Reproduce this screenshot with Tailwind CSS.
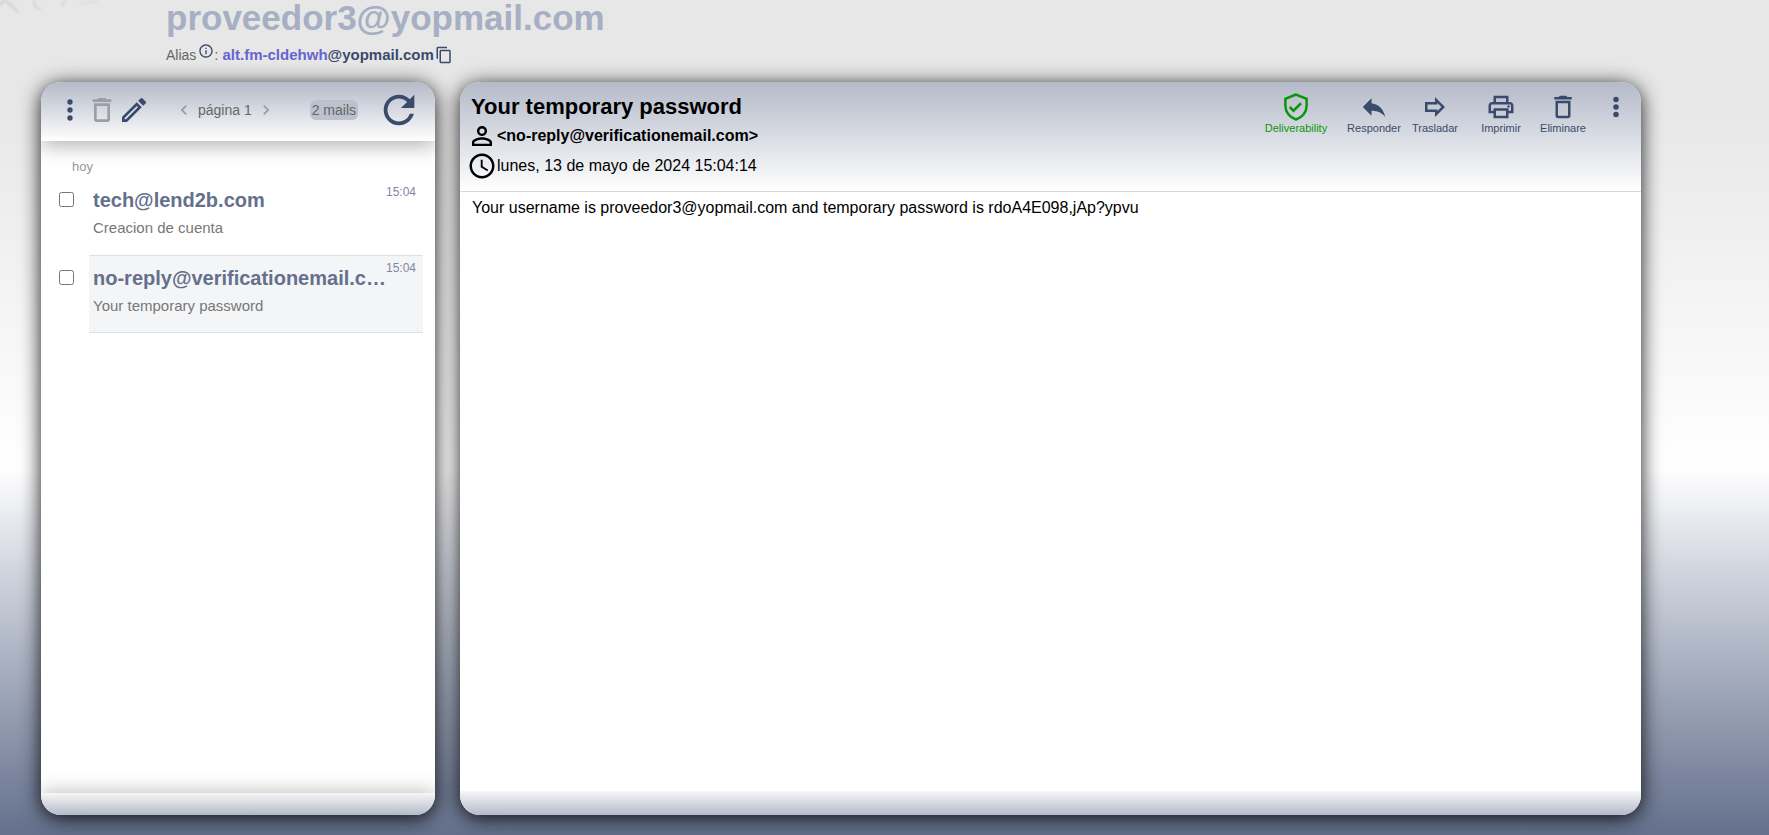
<!DOCTYPE html>
<html lang="es">
<head>
  <meta charset="UTF-8" />
  <meta name="viewport" content="width=device-width, initial-scale=1.0"/>
  <title>YOPmail - Inbox</title>
  <script src="https://cdn.jsdelivr.net/npm/@tailwindcss/browser@4"></script>
</head>
<body class="font-['Liberation_Sans',Arial,sans-serif] text-[#3a4a6b]">
  <div class="relative flex h-screen flex-col overflow-hidden bg-linear-to-b from-[#e7e7e7] from-12% via-white via-56% to-[#64708c] pb-5">

    <!-- Handwritten watermark -->
    <svg class="absolute top-0 left-0 h-5 w-28 opacity-40 blur-[1px]" viewBox="0 0 112 20" fill="none" stroke="#b4bac6" stroke-linecap="round">
      <path d="M0 5 4 0M5 0 17 11" stroke-width="3" />
      <path d="M35 0c-2 4-1 7 5 9M65 0l-3 6" stroke-width="2" />
      <path d="M81 0c-1 3 1 5 4 4l5-3 4 2 4-3" stroke-width="1" />
    </svg>

    <!-- Address -->
    <header class="h-[82px] shrink-0 pl-[166px]">
      <h1 class="text-[35px] leading-9 font-bold text-[#a6afc3]">proveedor3@yopmail.com</h1>
      <div class="mt-[9px] flex h-5 items-center text-[15px] leading-5">
        <span class="text-sm text-[#666]">Alias</span>
        <svg class="mb-2 ml-0.5 size-4" viewBox="0 0 24 24" fill="currentColor"><path d="M11 7h2v2h-2zm0 4h2v6h-2zm1-9C6.48 2 2 6.48 2 12s4.48 10 10 10 10-4.48 10-10S17.52 2 12 2zm0 18c-4.41 0-8-3.59-8-8s3.59-8 8-8 8 3.59 8 8-3.59 8-8 8z" /></svg>
        <span class="mr-1 text-[#666]">:</span>
        <b><span class="text-[#6565cf]">alt.fm-cldehwh</span>@yopmail.com</b>
        <button aria-label="Copiar"><svg class="ml-px size-[18px]" viewBox="0 0 24 24" fill="currentColor"><path d="M16 1H4c-1.1 0-2 .9-2 2v14h2V3h12V1zm3 4H8c-1.1 0-2 .9-2 2v14c0 1.1.9 2 2 2h11c1.1 0 2-.9 2-2V7c0-1.1-.9-2-2-2zm0 16H8V7h11v14z" /></svg></button>
      </div>
    </header>

    <main class="flex min-h-0 grow gap-[25px] pr-32 pl-[41px]">

      <!-- Inbox list -->
      <section class="flex w-[394px] shrink-0 flex-col overflow-hidden rounded-[20px] bg-white shadow-[0_3px_20px_rgba(0,0,0,0.9)]">
        <div class="z-10 flex h-[59px] shrink-0 items-center bg-linear-to-b from-[#b4bac8] to-white pr-[13px] pb-1 pl-[13px] text-sm text-[#666] shadow-[0_5px_20px_rgba(0,0,0,0.3)]">
          <button aria-label="Menú"><svg class="size-8 text-[#3a4a6b]" viewBox="0 0 24 24" fill="currentColor"><circle cx="12" cy="6" r="2" /><circle cx="12" cy="12" r="2" /><circle cx="12" cy="18" r="2" /></svg></button>
          <button aria-label="Borrar"><svg class="size-8 text-[#9b9ea5]" viewBox="0 0 24 24" fill="currentColor"><path d="M16 9v10H8V9h8m-1.5-6h-5l-1 1H5v2h14V4h-3.5l-1-1zM18 7H6v12c0 1.1.9 2 2 2h8c1.1 0 2-.9 2-2V7z" /></svg></button>
          <button aria-label="Escribir"><svg class="size-8 text-[#3a4a6b]" viewBox="0 0 24 24" fill="currentColor"><path d="M14.06 9.02l.92.92L5.92 19H5v-.92l9.06-9.06M17.66 3c-.25 0-.51.1-.7.29l-1.83 1.83 3.75 3.75 1.83-1.83c.39-.39.39-1.02 0-1.41l-2.34-2.34c-.2-.2-.45-.29-.71-.29zm-3.6 3.19L3 17.25V21h3.75L17.81 9.94l-3.75-3.75z" /></svg></button>
          <button class="ml-6" aria-label="Anterior"><svg class="size-5 text-[#999ca4]" viewBox="0 0 24 24" fill="currentColor"><path d="M15.41 7.41 14 6l-6 6 6 6 1.41-1.41L10.83 12z" /></svg></button>
          <span class="mx-1">página 1</span>
          <button aria-label="Siguiente"><svg class="size-5 text-[#999ca4]" viewBox="0 0 24 24" fill="currentColor"><path d="M10 6 8.59 7.41 13.17 12l-4.58 4.59L10 18l6-6z" /></svg></button>
          <span class="ml-auto rounded-md bg-[#bcc1ce] px-0.5">2 mails</span>
          <button class="ml-[18px]" aria-label="Actualizar"><svg class="size-[46px]" viewBox="0 0 24 24" fill="#3a4a6b"><path d="M17.65 6.35C16.2 4.9 14.21 4 12 4c-4.42 0-7.99 3.58-7.99 8s3.57 8 7.99 8c3.73 0 6.84-2.55 7.73-6h-2.08c-.82 2.33-3.04 4-5.65 4-3.31 0-6-2.69-6-6s2.69-6 6-6c1.66 0 3.14.69 4.22 1.78L13 11h7V4l-2.35 2.35z" /></svg></button>
        </div>

        <div class="grow pr-3 pl-[18px]">
          <p class="pt-4 pb-px pl-[13px] text-[13px] leading-5 text-[#999]">hoy</p>
          <div class="flex h-[77px]">
            <input type="checkbox" id="mail1" class="mt-3.5 mr-[15px] size-[15px] shrink-0" />
            <label for="mail1" class="relative min-w-0 grow px-1 pt-2.5">
              <span class="block w-[294px] truncate text-xl leading-6 font-bold text-[#64708c]">tech@lend2b.com</span>
              <span class="mt-1.5 block text-[15px] leading-5 text-[#777]">Creacion de cuenta</span>
              <span class="absolute top-1.5 right-[7px] text-xs text-[#7e88a0]">15:04</span>
            </label>
          </div>
          <div class="flex h-[78px]">
            <input type="checkbox" id="mail2" class="mt-[15px] mr-[15px] size-[15px] shrink-0" />
            <label for="mail2" class="relative min-w-0 grow border-y border-[#dcdfe4] bg-[#f4f5f7] px-1 pt-2.5">
              <span class="block w-[294px] truncate text-xl leading-6 font-bold text-[#64708c]">no-reply@verificationemail.com</span>
              <span class="mt-1.5 block text-[15px] leading-5 text-[#777]">Your temporary password</span>
              <span class="absolute top-1 right-[7px] text-xs text-[#7e88a0]">15:04</span>
            </label>
          </div>
        </div>

        <div class="h-[22px] shrink-0 bg-linear-to-b from-[#f7f7f8] to-[#b4bac8] shadow-[0_0_20px_rgba(0,0,0,0.3)]"></div>
      </section>

      <!-- Open mail -->
      <section class="flex min-w-0 grow flex-col overflow-hidden rounded-[20px] bg-white shadow-[0_3px_20px_rgba(0,0,0,0.9)]">
        <div class="flex h-[110px] shrink-0 justify-between border-b border-[#d9d9d9] bg-linear-to-b from-[#b4bac8] to-white pl-[7px]">
          <div class="pt-[11px] text-base text-black">
            <h2 class="pl-1 text-[22px] leading-7 font-bold">Your temporary password</h2>
            <div class="flex h-[30px] items-center font-bold">
              <svg class="size-[30px]" viewBox="0 0 24 24" fill="currentColor"><path d="M12 5.9a2.1 2.1 0 1 1 0 4.2 2.1 2.1 0 0 1 0-4.2m0 9c2.97 0 6.1 1.46 6.1 2.1v1.1H5.9V17c0-.64 3.13-2.1 6.1-2.1M12 4C9.79 4 8 5.79 8 8s1.79 4 4 4 4-1.79 4-4-1.79-4-4-4zm0 9c-2.67 0-8 1.34-8 4v3h16v-3c0-2.66-5.33-4-8-4z" /></svg>
              &lt;no-reply@verificationemail.com&gt;
            </div>
            <div class="flex h-[30px] items-center">
              <svg class="size-[30px]" viewBox="0 0 24 24" fill="currentColor"><path d="M11.99 2C6.47 2 2 6.48 2 12s4.47 10 9.99 10C17.52 22 22 17.52 22 12S17.52 2 11.99 2zM12 20c-4.42 0-8-3.58-8-8s3.58-8 8-8 8 3.58 8 8-3.58 8-8 8zM12.5 7H11v6l5.25 3.15.75-1.23-4.5-2.67z" /></svg>
              lunes, 13 de mayo de 2024 15:04:14
            </div>
          </div>
          <div class="flex items-start pt-2.5 pr-2.5 text-[11px] leading-3">
            <button class="flex w-[82px] flex-col items-center text-[#0a960a]">
              <svg class="size-[30px]" viewBox="0 0 24 24" fill="none" stroke="currentColor" stroke-width="2"><path d="M12 2 3.5 5.5V11c0 5 3.5 9.5 8.500 11 5-1.5 8.500-6 8.500-11V5.500z" /><path d="m7 12 3 3 6-6" /></svg>
              Deliverability
            </button>
            <button class="flex w-[74px] flex-col items-center">
              <svg class="size-[30px]" viewBox="0 0 24 24" fill="currentColor"><path d="M10 9V5l-7 7 7 7v-4.1c5 0 8.5 1.6 11 5.1-1-5-4-10-11-11z" /></svg>
              Responder
            </button>
            <button class="flex w-12 flex-col items-center">
              <svg class="size-[30px]" viewBox="0 0 24 24" fill="currentColor"><path d="m14 8.83 3.17 3.17L14 15.17V14H6v-4h8V8.83M12 4v4H4v8h8v4l8-8-8-8z" /></svg>
              Trasladar
            </button>
            <button class="flex w-[84px] flex-col items-center">
              <svg class="size-[30px]" viewBox="0 0 24 24" fill="currentColor"><path d="M19 8h-1V3H6v5H5c-1.66 0-3 1.34-3 3v6h4v4h12v-4h4v-6c0-1.66-1.34-3-3-3zM8 5h8v3H8V5zm8 12v2H8v-4h8v2zm2-2v-2H6v2H4v-4c0-.55.45-1 1-1h14c.55 0 1 .45 1 1v4h-2z" /><circle cx="18" cy="11.5" r="1" /></svg>
              Imprimir
            </button>
            <button class="flex w-10 flex-col items-center">
              <svg class="size-[30px]" viewBox="0 0 24 24" fill="currentColor"><path d="M16 9v10H8V9h8m-1.5-6h-5l-1 1H5v2h14V4h-3.5l-1-1zM18 7H6v12c0 1.1.9 2 2 2h8c1.1 0 2-.9 2-2V7z" /></svg>
              Eliminare
            </button>
            <button class="ml-[18px]" aria-label="Más"><svg class="size-[30px]" viewBox="0 0 24 24" fill="currentColor"><circle cx="12" cy="6" r="2.2" /><circle cx="12" cy="12" r="2.2" /><circle cx="12" cy="18" r="2.2" /></svg></button>
          </div>
        </div>

        <p class="grow px-3 py-1 text-base text-black">Your username is proveedor3@yopmail.com and temporary password is rdoA4E098,jAp?ypvu</p>

        <div class="h-6 shrink-0 bg-linear-to-b from-[#f7f7f8] to-[#b4bac8]"></div>
      </section>
    </main>
  </div>
</body>
</html>
